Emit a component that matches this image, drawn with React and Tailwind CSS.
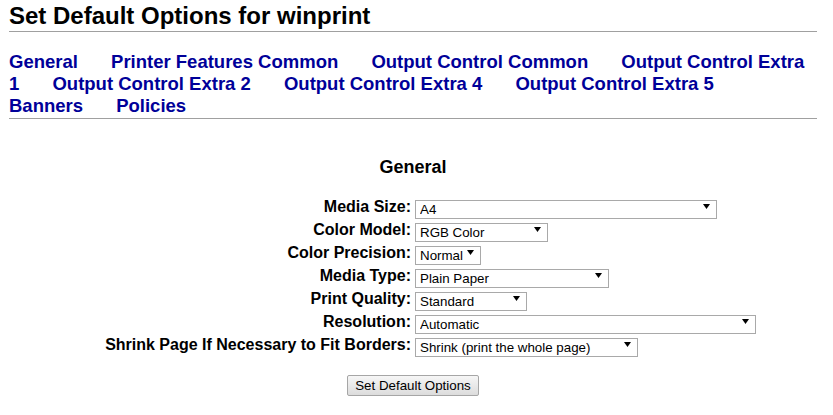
const navLinks = [
  "General",
  "Printer Features Common",
  "Output Control Common",
  "Output Control Extra 1",
  "Output Control Extra 2",
  "Output Control Extra 4",
  "Output Control Extra 5",
  "Banners",
  "Policies"
];

const options = [
  { label: "Media Size:", value: "A4", width: "w-[302px]" },
  { label: "Color Model:", value: "RGB Color", width: "w-[133px]" },
  { label: "Color Precision:", value: "Normal", width: "w-[66px]" },
  { label: "Media Type:", value: "Plain Paper", width: "w-[194px]" },
  { label: "Print Quality:", value: "Standard", width: "w-[112px]" },
  { label: "Resolution:", value: "Automatic", width: "w-[341px]" },
  { label: "Shrink Page If Necessary to Fit Borders:", value: "Shrink (print the whole page)", width: "w-[223px]" }
];

function Dropdown({ value, width }) {
  return (
    <span className={`relative inline-block h-[19px] ${width}`}>
      <select
        defaultValue={value}
        className="h-[19px] w-full appearance-none rounded-none border border-[#a9a9a9] bg-white pl-[4px] text-[13.33px] leading-[17px] text-black outline-none"
      >
        <option>{value}</option>
      </select>
      <svg className="pointer-events-none absolute right-[7px] top-[7px]" width="7" height="5" viewBox="0 0 7 5">
        <path d="M0 0h7L3.5 5z" fill="#000" />
      </svg>
    </span>
  );
}

export default function App() {
  return (
    <div className="h-[415px] w-[833px] overflow-hidden bg-white pl-[9px] pr-[16px] font-['Liberation_Sans',Arial,sans-serif] text-black">
      <h1 className="pt-[2px] text-[24px] font-bold leading-[28px]">Set Default Options for winprint</h1>
      <div className="mt-[1px] h-px bg-[#a0a0a0]" />

      <p className="mt-[19px] text-[18.5px] font-bold leading-[22px]">
        {navLinks.map((link, i) => (
          <span key={link}>
            <a href="#" className={i < navLinks.length - 1 ? "mr-[28px] text-[#000099] no-underline" : "text-[#000099] no-underline"}>
              {link}
            </a>{" "}
          </span>
        ))}
      </p>
      <div className="mt-[1px] h-px bg-[#a0a0a0]" />

      <h2 className="mt-[37px] text-center text-[18px] font-bold leading-[22px]">General</h2>

      <div className="ml-[92px] mt-[19px] grid grid-cols-[310px_auto] gap-x-[4px] gap-y-[4px]">
        {options.map((opt) => (
          <div key={opt.label} className="contents">
            <label className="whitespace-nowrap text-right text-[16px] font-bold leading-[19px]">{opt.label}</label>
            <div className="h-[19px]">
              <Dropdown value={opt.value} width={opt.width} />
            </div>
          </div>
        ))}
      </div>

      <div className="mt-[21px] flex justify-center">
        <button
          type="button"
          className="h-[21px] rounded-[2px] border border-[#a6a6a6] bg-gradient-to-b from-[#f6f6f6] to-[#dcdcdc] px-[7px] text-[13.33px] leading-[19px] text-black"
        >
          Set Default Options
        </button>
      </div>
    </div>
  );
}
